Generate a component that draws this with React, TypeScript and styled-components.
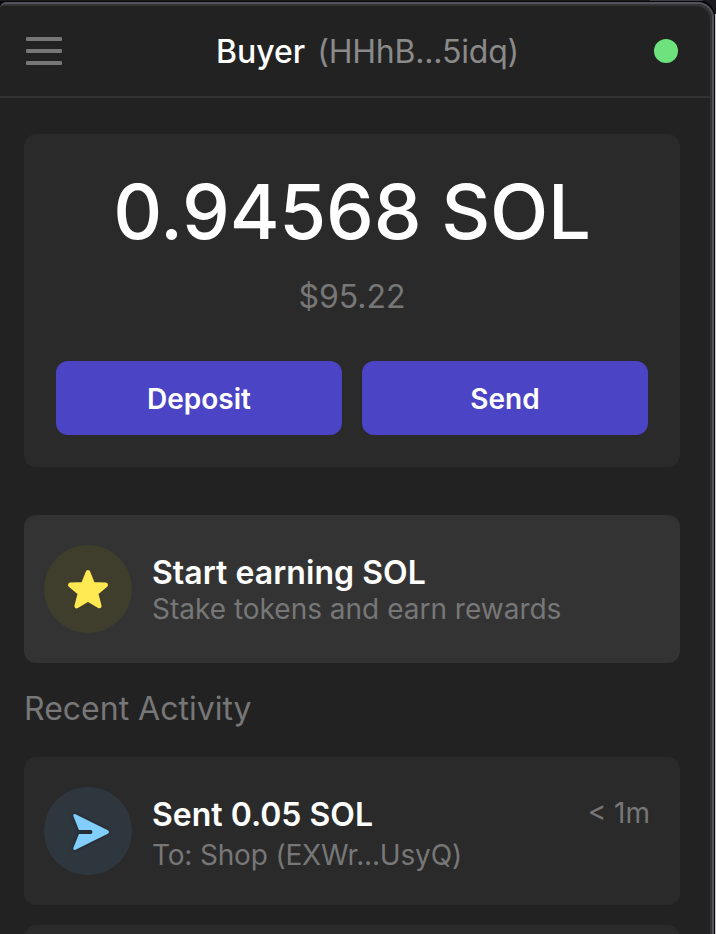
import React from "react";
import styled, { createGlobalStyle } from "styled-components";

const GlobalStyle = createGlobalStyle`
  * { box-sizing: border-box; }
  body {
    margin: 0;
    background: #1a1a1e;
    font-family: Inter, "Liberation Sans", sans-serif;
    overflow: hidden;
  }
`;

const Desktop = styled.div`
  width: 716px;
  height: 934px;
  overflow: hidden;
  background: linear-gradient(#1b1a20 0 14px, #c9c9cd 14px);
`;

const Window = styled.div`
  display: flex;
  height: 934px;
  width: 715px;
  padding-top: 2px;
  background: linear-gradient(90deg, #1a1a1f 0 650px, #3e3d47 650px) top / 100% 1px no-repeat, #08080a;
  border-top-right-radius: 16px;
`;

const Panel = styled.div`
  width: 714px;
  height: 940px;
  flex: none;
  background: #222222;
  border-top: 2px solid #55545e;
  border-right: 2px solid #55545e;
  border-radius: 6px 16px 0 0;
  box-shadow: inset -2px 2px 0 #343434;
  padding: 2px 2px 0 0;
`;

const Header = styled.header`
  display: flex;
  align-items: center;
  height: 92px;
  padding: 0 32px 0 26px;
  border-bottom: 2px solid #333333;
`;

const MenuButton = styled.button`
  display: flex;
  flex-direction: column;
  gap: 8px;
  width: 36px;
  padding: 0;
  border: 0;
  background: none;
`;

const MenuBar = styled.span`
  height: 4px;
  border-radius: 1px;
  background: #777777;
`;

const Account = styled.div`
  display: flex;
  flex: 1;
  gap: 12px;
  padding: 1px 0 0 154px;
  white-space: nowrap;
`;

const Label = styled.div<{ $size: number; $line: number; $weight?: number; $color?: string; $spacing?: number }>`
  font-size: ${(p) => p.$size}px;
  line-height: ${(p) => p.$line}px;
  font-weight: ${(p) => p.$weight ?? 400};
  color: ${(p) => p.$color ?? "#777777"};
  letter-spacing: ${(p) => p.$spacing ?? 0}px;
  white-space: nowrap;
`;

const StatusDot = styled.span`
  width: 24px;
  height: 24px;
  border-radius: 50%;
  background: #6ee37d;
`;

const Content = styled.main`
  width: 704px;
  padding: 36px 24px 0;
`;

const BalanceCard = styled.section`
  display: flex;
  flex-direction: column;
  align-items: center;
  height: 333px;
  padding: 32px;
  border-radius: 12px;
  background: #2a2a2a;
`;

const Fiat = styled.div`
  margin-top: 20px;
`;

const Actions = styled.div`
  display: grid;
  grid-template-columns: 1fr 1fr;
  gap: 20px;
  width: 100%;
  margin-top: auto;
`;

const ActionButton = styled.button`
  height: 74px;
  padding: 2px 0 0;
  border: 0;
  border-radius: 12px;
  background: #4b44c5;
  color: #ffffff;
  font: 600 28px/34px Inter, sans-serif;
`;

const RowCard = styled.section<{ $bg: string; $top: number }>`
  display: flex;
  align-items: center;
  height: 148px;
  margin-top: ${(p) => p.$top}px;
  padding: 0 30px 0 20px;
  border-radius: 12px;
  background: ${(p) => p.$bg};
`;

const IconCircle = styled.div<{ $bg: string }>`
  flex: none;
  width: 88px;
  height: 88px;
  border-radius: 50%;
  background: ${(p) => p.$bg};
  svg { display: block; }
`;

const RowText = styled.div<{ $gap: number; $offset?: number }>`
  display: flex;
  flex-direction: column;
  gap: ${(p) => p.$gap}px;
  margin-left: 20px;
  padding-top: ${(p) => p.$offset ?? 0}px;
`;

const RowTime = styled.div`
  align-self: flex-start;
  margin: 39px 0 0 auto;
`;

const SectionTitle = styled.h2`
  margin: 26px 0 0;
`;

const StarIcon = () => (
  <svg width="88" height="88" viewBox="0 0 88 88">
    <path
      d="M44 27.3 L48.8 39.3 L61.7 39.9 L51.9 48.2 L55.3 61 L44 54.2 L32.7 61 L36.1 48.2 L26.3 39.9 L39.2 39.3Z"
      fill="#ffe952"
      stroke="#ffe952"
      strokeWidth="4.6"
      strokeLinejoin="round"
    />
  </svg>
);

const SendIcon = () => (
  <svg width="88" height="88" viewBox="0 0 88 88">
    <defs>
      <filter id="send-shadow" x="-30%" y="-30%" width="160%" height="160%">
        <feDropShadow dx="0" dy="0" stdDeviation="2" floodColor="#000000" floodOpacity="0.5" />
      </filter>
    </defs>
    <path
      d="M31.4 27.2 L64.2 43.6 Q66 45 64.2 46.4 L31.4 62.8 Q28.8 63.4 29.4 61 L35 47 H47 Q48.5 47 48.5 45 Q48.5 43 47 43 H35 L29.4 29 Q28.8 26.6 31.4 27.2Z"
      fill="#81cefd"
      filter="url(#send-shadow)"
    />
  </svg>
);

export default function App() {
  return (
    <Desktop>
      <GlobalStyle />
      <Window>
        <Panel>
          <Header>
            <MenuButton aria-label="Menu">
              <MenuBar />
              <MenuBar />
              <MenuBar />
            </MenuButton>
            <Account>
              <Label $size={32} $line={39} $weight={500} $color="#ffffff">Buyer</Label>
              <Label $size={32} $line={39} $color="#8a8a8a" $spacing={-0.2}>(HHhB...5idq)</Label>
            </Account>
            <StatusDot />
          </Header>
          <Content>
            <BalanceCard>
              <Label $size={76} $line={91} $weight={500} $color="#ffffff" $spacing={-0.25}>0.94568 SOL</Label>
              <Fiat>
                <Label $size={32} $line={39}>$95.22</Label>
              </Fiat>
              <Actions>
                <ActionButton>Deposit</ActionButton>
                <ActionButton>Send</ActionButton>
              </Actions>
            </BalanceCard>
            <RowCard $bg="#333333" $top={48}>
              <IconCircle $bg="#3f3d2b"><StarIcon /></IconCircle>
              <RowText $gap={0}>
                <Label $size={32} $line={39} $weight={600} $color="#ffffff" $spacing={0.05}>Start earning SOL</Label>
                <Label $size={28} $line={34}>Stake tokens and earn rewards</Label>
              </RowText>
            </RowCard>
            <SectionTitle>
              <Label as="span" $size={32} $line={39}>Recent Activity</Label>
            </SectionTitle>
            <RowCard $bg="#2a2a2a" $top={29}>
              <IconCircle $bg="#2f373e"><SendIcon /></IconCircle>
              <RowText $gap={4} $offset={4}>
                <Label $size={32} $line={39} $weight={600} $color="#ffffff">Sent 0.05 SOL</Label>
                <Label $size={28} $line={34} $spacing={-0.17}>To: Shop (EXWr...UsyQ)</Label>
              </RowText>
              <RowTime>
                <Label $size={28} $line={34}>&lt; 1m</Label>
              </RowTime>
            </RowCard>
            <RowCard $bg="#2a2a2a" $top={20} />
          </Content>
        </Panel>
      </Window>
    </Desktop>
  );
}
